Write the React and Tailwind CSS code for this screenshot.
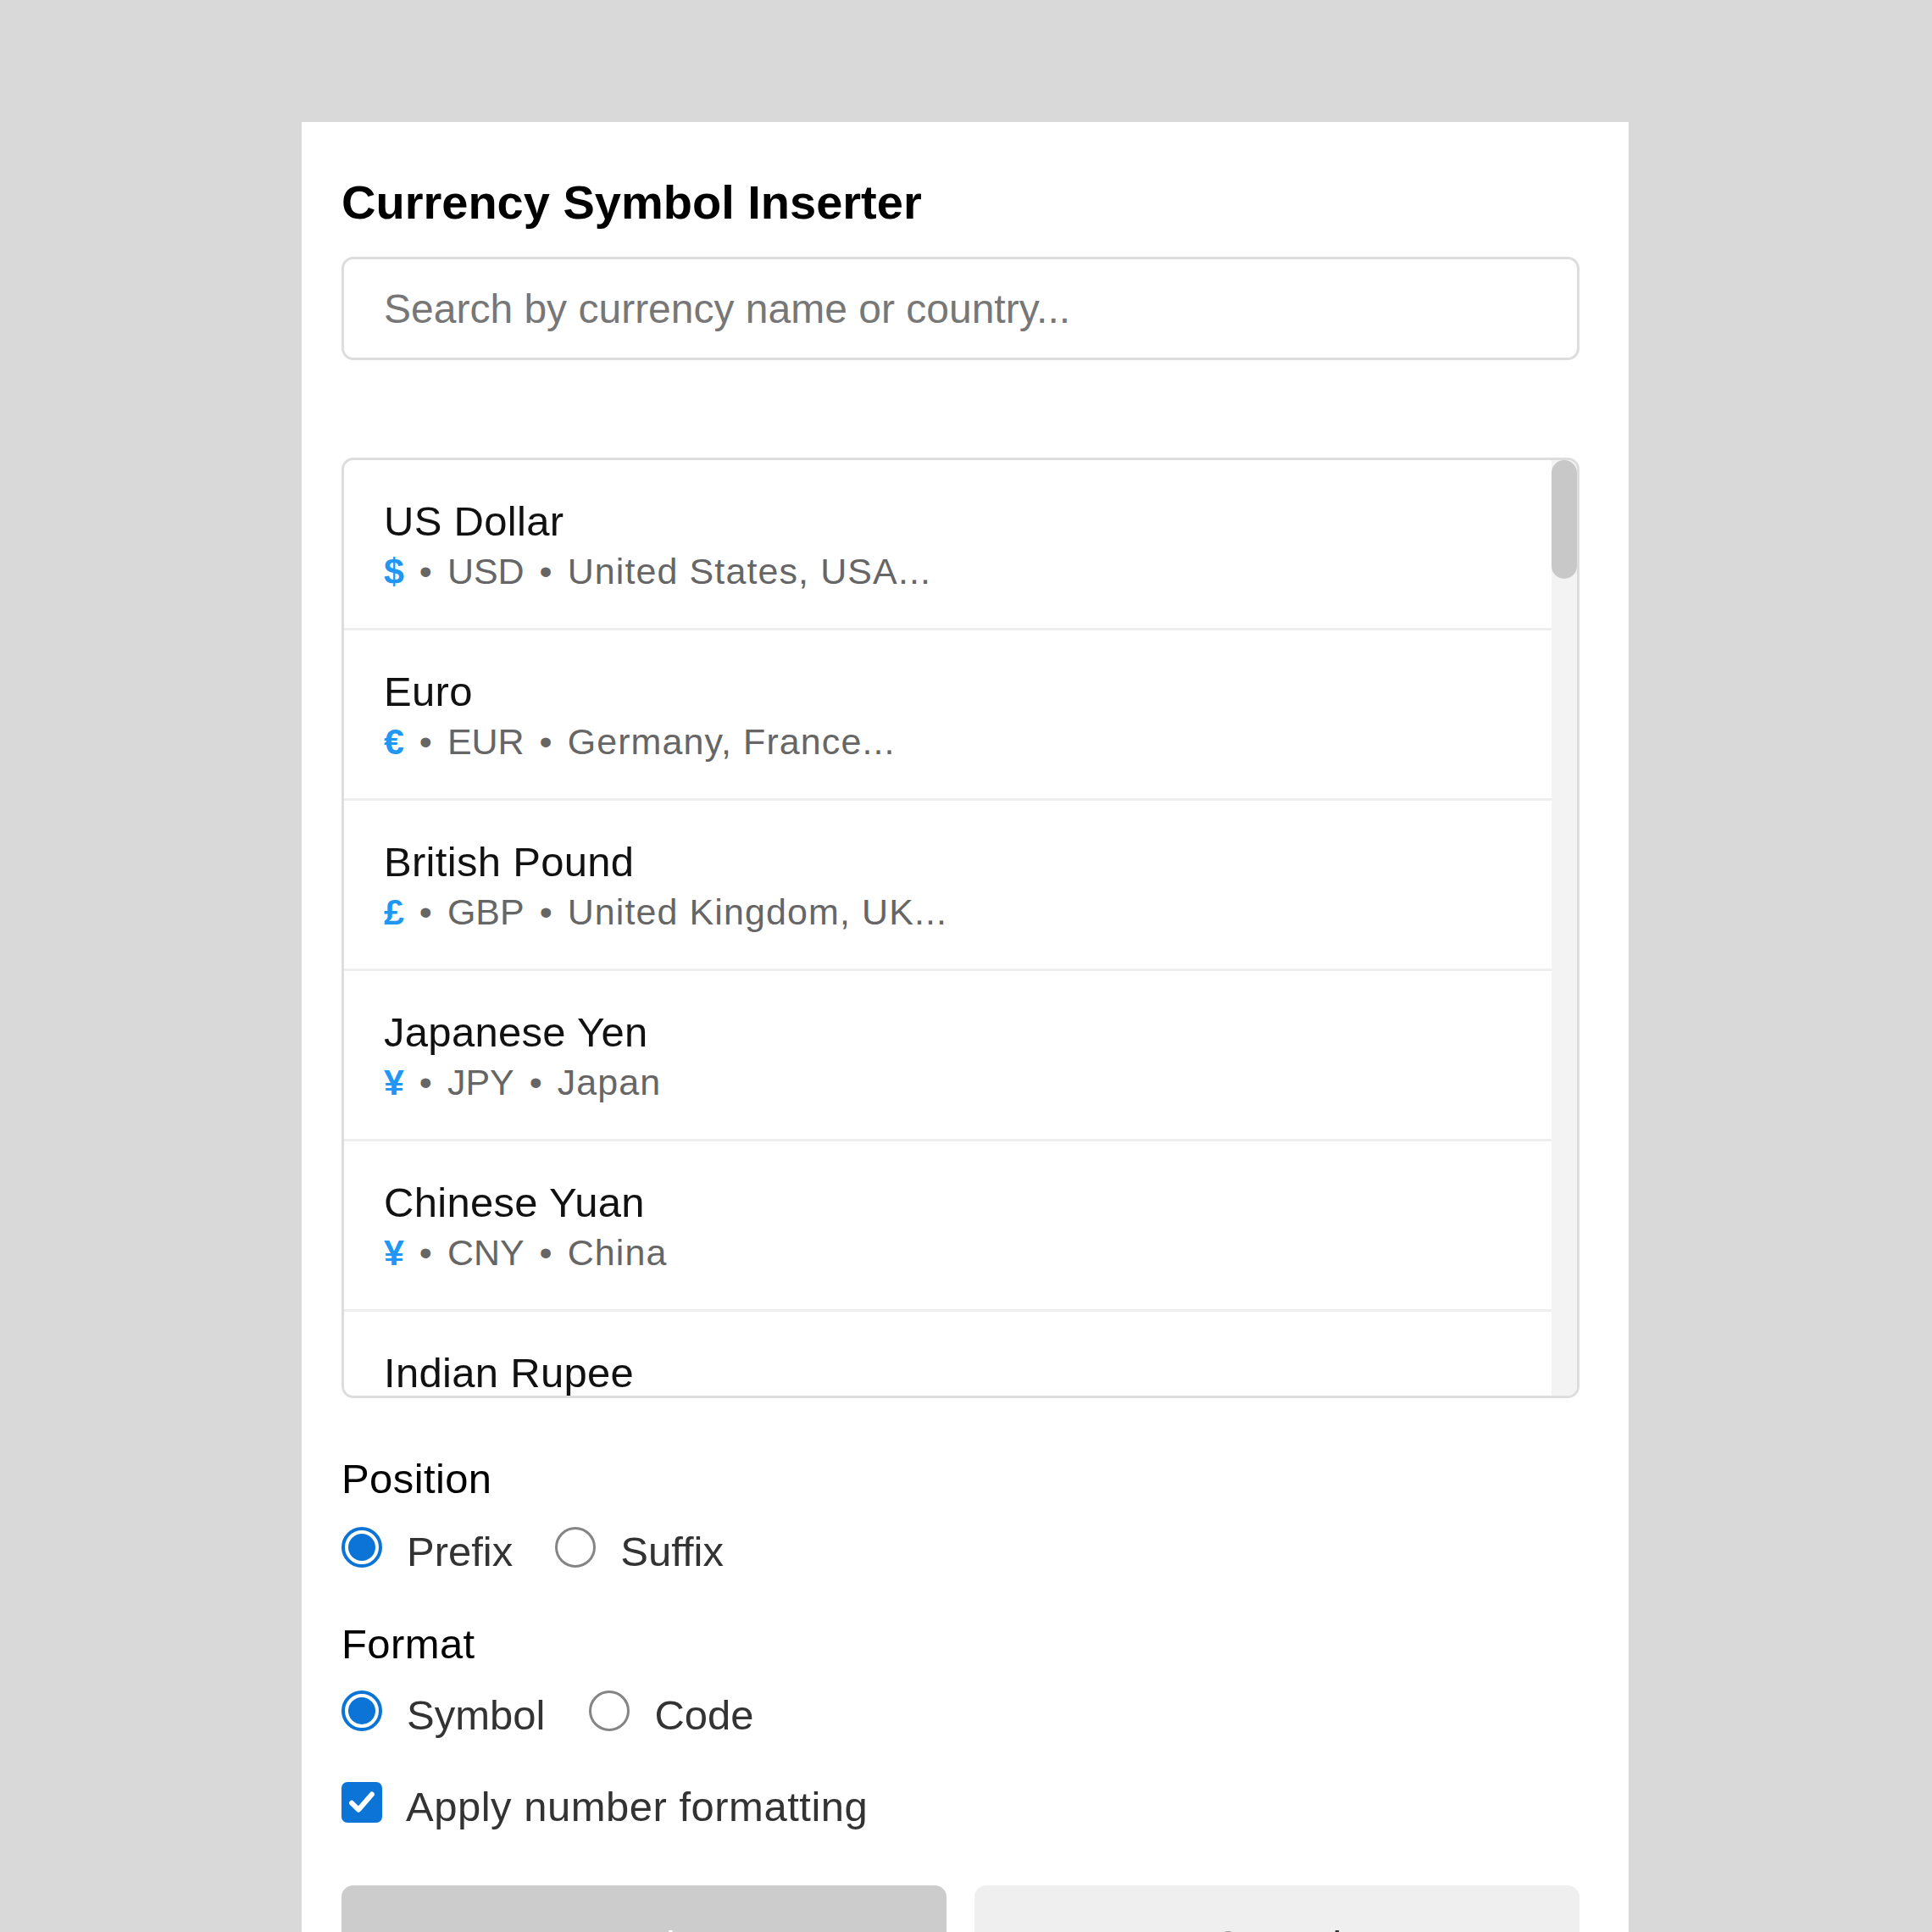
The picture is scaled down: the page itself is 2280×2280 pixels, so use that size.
import React, { useState } from 'react';

const currencies = [
    { name: 'US Dollar', symbol: '$', code: 'USD', countries: 'United States, USA...' },
    { name: 'Euro', symbol: '€', code: 'EUR', countries: 'Germany, France...' },
    { name: 'British Pound', symbol: '£', code: 'GBP', countries: 'United Kingdom, UK...' },
    { name: 'Japanese Yen', symbol: '¥', code: 'JPY', countries: 'Japan' },
    { name: 'Chinese Yuan', symbol: '¥', code: 'CNY', countries: 'China' },
    { name: 'Indian Rupee', symbol: '₹', code: 'INR', countries: 'India' },
    { name: 'Swiss Franc', symbol: 'Fr', code: 'CHF', countries: 'Switzerland' },
];

const Radio = ({ checked, label, onClick }) => (
    <button type="button" onClick={onClick} className="flex items-center">
        {checked ? (
            <span className="mb-[10px] flex h-[48px] w-[48px] items-center justify-center rounded-full border-[4px] border-[#0b74d6]">
                <span className="h-[32px] w-[32px] rounded-full bg-[#0b74d6]"></span>
            </span>
        ) : (
            <span className="mb-[10px] h-[48px] w-[48px] rounded-full border-[3px] border-[#858585]"></span>
        )}
        <span className="ml-[29px] text-[49px] leading-[56px] text-[#333333]">{label}</span>
    </button>
);

const CurrencyRow = ({ item }) => (
    <div className="border-b-[3px] border-[#eeeeee] pl-[47px] pt-[44px] pb-[43px]">
        <div className="text-[49px] leading-[56px] tracking-[0.3px] text-[#111111]">{item.name}</div>
        <div className="mt-[7px] text-[43px] leading-[48px] text-[#666666] whitespace-nowrap">
            <span className="font-bold text-[#2196f3]">{item.symbol}</span>
            <span className="mx-[6px]"> • </span>
            {item.code}
            <span className="mx-[6px]"> • </span>
            <span className="tracking-[1.1px]">{item.countries}</span>
        </div>
    </div>
);

const App = () => {
    const [position, setPosition] = useState('prefix');
    const [format, setFormat] = useState('symbol');
    const [formatNumbers, setFormatNumbers] = useState(true);

    return (
        <div className="min-h-screen bg-[#d9d9d9] pt-[144px] pl-[356px] font-['Liberation_Sans',Arial,sans-serif]">
            <div className="w-[1566px] bg-white pl-[47px] pr-[58px] pt-[63px] pb-[80px]">
                <h2 className="text-[56px] font-bold leading-[64px] text-black">Currency Symbol Inserter</h2>

                <input
                    type="text"
                    placeholder="Search by currency name or country..."
                    className="mt-[32px] h-[122px] w-full rounded-[14px] border-[3px] border-[#dddddd] pl-[47px] text-[48px] text-black outline-none placeholder:text-[#777777]"
                />

                <div className="mt-[115px] flex h-[1110px] overflow-hidden rounded-[14px] border-[3px] border-[#dddddd]">
                    <div className="flex-1 overflow-hidden">
                        {currencies.map((item) => (
                            <CurrencyRow key={item.code} item={item} />
                        ))}
                    </div>
                    <div className="w-[30px] bg-[#f3f3f3]">
                        <div className="h-[140px] w-[30px] rounded-full bg-[#c8c8c8]"></div>
                    </div>
                </div>

                <div className="mt-[67px] text-[49px] leading-[56px] tracking-[0.4px] text-black">Position</div>
                <div className="mt-[29px] flex gap-[50px]">
                    <Radio checked={position === 'prefix'} label="Prefix" onClick={() => setPosition('prefix')} />
                    <Radio checked={position === 'suffix'} label="Suffix" onClick={() => setPosition('suffix')} />
                </div>

                <div className="mt-[52px] text-[49px] leading-[56px] tracking-[0.4px] text-black">Format</div>
                <div className="mt-[27px] flex gap-[52px]">
                    <Radio checked={format === 'symbol'} label="Symbol" onClick={() => setFormat('symbol')} />
                    <Radio checked={format === 'code'} label="Code" onClick={() => setFormat('code')} />
                </div>

                <button type="button" onClick={() => setFormatNumbers(!formatNumbers)} className="mt-[50px] flex items-center">
                    {formatNumbers ? (
                        <span className="mb-[10px] flex h-[48px] w-[48px] items-center justify-center rounded-[7px] bg-[#0b74d6]">
                            <svg width="38" height="38" viewBox="0 0 24 24" fill="none" stroke="white" strokeWidth="3.8" strokeLinecap="round" strokeLinejoin="round">
                                <path d="M4.5 12.5l5 5L19.5 6" />
                            </svg>
                        </span>
                    ) : (
                        <span className="mb-[10px] h-[48px] w-[48px] rounded-[7px] border-[3px] border-[#858585]"></span>
                    )}
                    <span className="ml-[28px] text-[49px] leading-[56px] tracking-[0.5px] text-[#333333]">Apply number formatting</span>
                </button>

                <div className="mt-[64px] grid grid-cols-2 gap-[33px]">
                    <button type="button" className="rounded-[14px] bg-[#cccccc] py-[43px] text-[49px] leading-[56px] text-white">
                        Apply
                    </button>
                    <button type="button" className="rounded-[14px] bg-[#efefef] py-[43px] text-[49px] leading-[56px] text-[#333333]">
                        Cancel
                    </button>
                </div>
            </div>
        </div>
    );
};

export default App;
